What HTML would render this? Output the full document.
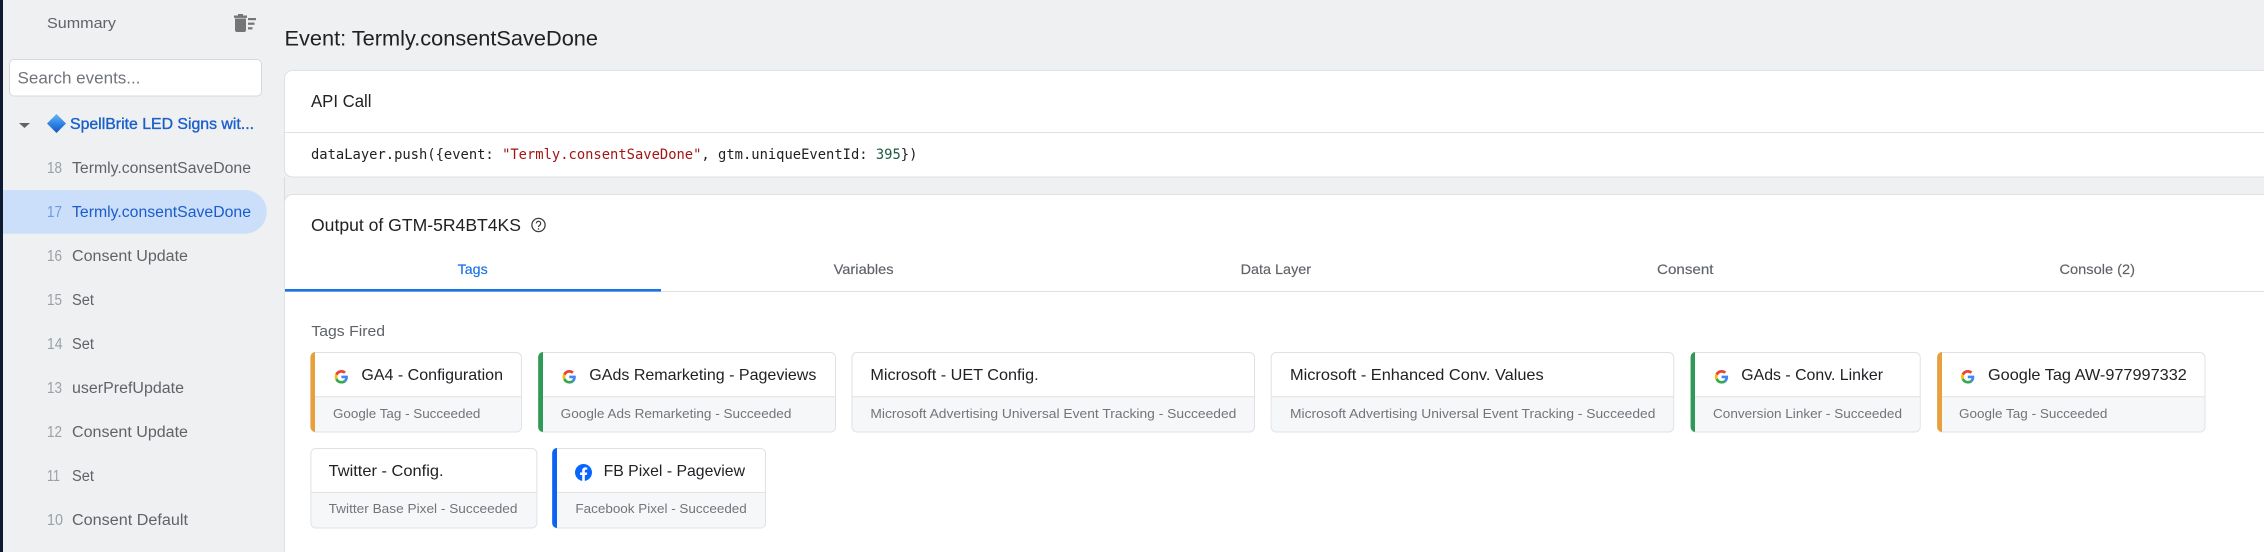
<!DOCTYPE html>
<html lang="en">
<head>
<meta charset="utf-8">
<title>Event: Termly.consentSaveDone</title>
<style>
html,body{margin:0;padding:0;width:2264px;height:552px;overflow:hidden;background:#eff0f2}
svg{display:block}
text{font-family:"Liberation Sans",Arial,sans-serif;white-space:pre}
.mono{font-family:"DejaVu Sans Mono","Liberation Mono",monospace;font-size:13.8px;fill:#202124}
.num{font-size:15.5px;fill:#9aa0a6}
.lab{font-size:15.5px;fill:#5f6368}
.h{font-size:17.5px;fill:#202124}
.tab{font-size:14px;fill:#5f6368;stroke:#5f6368;stroke-width:.15px}
.t{font-size:15.8px;fill:#202124}
.s{font-size:13px;fill:#70757a}
.card{fill:#fff;stroke:#dfe1e5;stroke-width:1}
.foot{fill:#f6f7f9}
.line{stroke:#dfe1e5;stroke-width:1}
</style>
</head>
<body>
<svg width="2264" height="552" viewBox="0 0 2264 552" xmlns="http://www.w3.org/2000/svg">
<defs>
<symbol id="g" viewBox="0 0 48 48">
<path fill="#EA4335" d="M24 9.5c3.54 0 6.71 1.22 9.21 3.6l6.85-6.85C35.9 2.38 30.47 0 24 0 14.62 0 6.51 5.38 2.56 13.22l7.98 6.19C12.43 13.72 17.74 9.5 24 9.5z"/>
<path fill="#4285F4" d="M46.98 24.55c0-1.57-.15-3.09-.38-4.55H24v9.02h12.94c-.58 2.96-2.26 5.48-4.78 7.18l7.73 6c4.51-4.18 7.09-10.36 7.09-17.65z"/>
<path fill="#FBBC05" d="M10.53 28.59c-.48-1.45-.76-2.99-.76-4.59s.27-3.14.76-4.59l-7.98-6.19C.92 16.46 0 20.12 0 24c0 3.88.92 7.54 2.56 10.78l7.97-6.19z"/>
<path fill="#34A853" d="M24 48c6.48 0 11.93-2.13 15.89-5.81l-7.73-6c-2.15 1.45-4.92 2.3-8.16 2.3-6.26 0-11.57-4.22-13.47-9.91l-7.98 6.19C6.51 42.62 14.62 48 24 48z"/>
</symbol>
<linearGradient id="dia" x1="0" y1="0" x2="0" y2="1">
<stop offset="0" stop-color="#6db3f5"/><stop offset=".5" stop-color="#2f86e6"/><stop offset="1" stop-color="#1257bd"/>
</linearGradient>
</defs>

<!-- window backgrounds -->
<rect x="0" y="0" width="2264" height="552" fill="#eff0f2"/>
<rect x="0" y="0" width="3" height="552" fill="#0e1a30"/>
<line x1="284.5" y1="177" x2="284.5" y2="552" stroke="#d9dbdf" stroke-width="1"/>

<!-- sidebar -->
<text x="47" y="28" font-size="15" fill="#5f6368" textLength="69" lengthAdjust="spacingAndGlyphs">Summary</text>
<g fill="#757575">
<rect x="234" y="15.5" width="13" height="2.4"/>
<rect x="238" y="14" width="5" height="2"/>
<path d="M235 18.5h11v11.5a2 2 0 0 1-2 2h-7a2 2 0 0 1-2-2z"/>
<rect x="248" y="18" width="8" height="2.2"/>
<rect x="248" y="22.6" width="6.5" height="2.2"/>
<rect x="248" y="27.2" width="4.5" height="2.2"/>
</g>
<rect x="9.5" y="59.5" width="252" height="36.5" rx="4.5" fill="#fff" stroke="#d6d8dc" stroke-width="1"/>
<text x="17.5" y="83.5" font-size="16.5" fill="#70757a" textLength="123" lengthAdjust="spacingAndGlyphs">Search events...</text>

<path d="M19 123h11l-5.5 5z" fill="#5f6368"/>
<polygon points="56.5,114 66,123.5 56.5,133 47,123.5" fill="url(#dia)"/>
<text x="70" y="129" font-size="15.5" fill="#1a5fcb" stroke="#1a5fcb" stroke-width=".35" textLength="184" lengthAdjust="spacingAndGlyphs">SpellBrite LED Signs wit...</text>

<path d="M3 190H245a21.8 21.8 0 0 1 0 43.7H3z" fill="#cbdffb"/>

<text class="num" x="47" y="173" textLength="15" lengthAdjust="spacingAndGlyphs">18</text>
<text class="lab" x="72" y="173" textLength="179" lengthAdjust="spacingAndGlyphs">Termly.consentSaveDone</text>
<text class="num" x="47" y="217" textLength="15" lengthAdjust="spacingAndGlyphs" style="fill:#6d9be0">17</text>
<text class="lab" x="72" y="217" textLength="179" lengthAdjust="spacingAndGlyphs" style="fill:#1a5cc8">Termly.consentSaveDone</text>
<text class="num" x="47" y="261" textLength="15" lengthAdjust="spacingAndGlyphs">16</text>
<text class="lab" x="72" y="261" textLength="116" lengthAdjust="spacingAndGlyphs">Consent Update</text>
<text class="num" x="47" y="305" textLength="15" lengthAdjust="spacingAndGlyphs">15</text>
<text class="lab" x="72" y="305" textLength="22" lengthAdjust="spacingAndGlyphs">Set</text>
<text class="num" x="47" y="349" textLength="15.5" lengthAdjust="spacingAndGlyphs">14</text>
<text class="lab" x="72" y="349" textLength="22" lengthAdjust="spacingAndGlyphs">Set</text>
<text class="num" x="47" y="393" textLength="15" lengthAdjust="spacingAndGlyphs">13</text>
<text class="lab" x="72" y="393" textLength="112" lengthAdjust="spacingAndGlyphs">userPrefUpdate</text>
<text class="num" x="47" y="437" textLength="15" lengthAdjust="spacingAndGlyphs">12</text>
<text class="lab" x="72" y="437" textLength="116" lengthAdjust="spacingAndGlyphs">Consent Update</text>
<text class="num" x="47" y="481" textLength="13" lengthAdjust="spacingAndGlyphs">11</text>
<text class="lab" x="72" y="481" textLength="22" lengthAdjust="spacingAndGlyphs">Set</text>
<text class="num" x="47" y="525" textLength="16" lengthAdjust="spacingAndGlyphs">10</text>
<text class="lab" x="72" y="525" textLength="116" lengthAdjust="spacingAndGlyphs">Consent Default</text>

<!-- main heading -->
<text x="284.5" y="45.7" font-size="21.5" fill="#202124" textLength="313.5" lengthAdjust="spacingAndGlyphs">Event: Termly.consentSaveDone</text>

<!-- API call card -->
<path class="card" d="M2270 70.5H292.5a8 8 0 0 0-8 8V169a8 8 0 0 0 8 8H2270z"/>
<line class="line" x1="285" y1="132.5" x2="2264" y2="132.5"/>
<text class="h" x="311" y="107" textLength="60.5" lengthAdjust="spacingAndGlyphs">API Call</text>
<text class="mono" x="311" y="159">dataLayer.push({event: <tspan fill="#a31515">"Termly.consentSaveDone"</tspan>, gtm.uniqueEventId: <tspan fill="#1d5c3f">395</tspan>})</text>

<!-- Output card -->
<path class="card" d="M2270 194.5H292.5a8 8 0 0 0-8 8V560H2270z"/>
<text class="h" x="311" y="231" textLength="210" lengthAdjust="spacingAndGlyphs">Output of GTM-5R4BT4KS</text>
<circle cx="538.5" cy="225" r="6.6" fill="none" stroke="#3c4043" stroke-width="1.3"/>
<path d="M536.3 223.4a2.2 2.2 0 1 1 3.4 1.9c-.8.5-1.2.9-1.2 1.7" fill="none" stroke="#3c4043" stroke-width="1.2"/>
<circle cx="538.5" cy="228.9" r=".8" fill="#3c4043"/>

<!-- tabs -->
<text class="tab" x="457.7" y="274" textLength="30" lengthAdjust="spacingAndGlyphs" style="fill:#1a73e8;stroke:#1a73e8">Tags</text>
<text class="tab" x="833.6" y="274" textLength="60" lengthAdjust="spacingAndGlyphs">Variables</text>
<text class="tab" x="1240.6" y="274" textLength="70.5" lengthAdjust="spacingAndGlyphs">Data Layer</text>
<text class="tab" x="1657" y="274" textLength="56.5" lengthAdjust="spacingAndGlyphs">Consent</text>
<text class="tab" x="2059.5" y="274" textLength="75.5" lengthAdjust="spacingAndGlyphs">Console (2)</text>
<line class="line" x1="285" y1="291.5" x2="2264" y2="291.5"/>
<rect x="285" y="289" width="376" height="2.6" fill="#1a73e8"/>

<text x="311.4" y="336" font-size="14.5" fill="#5f6368" textLength="73.6" lengthAdjust="spacingAndGlyphs">Tags Fired</text>

<!-- Card 1 -->
<rect class="card" x="310.9" y="352.5" width="210.5" height="79.5" rx="5"/>
<path class="foot" d="M315 397H521v30a4.5 4.5 0 0 1-4.5 4.5H315z"/>
<path d="M315 352h-.0a5 5 0 0 0-4.6 5V427a5 5 0 0 0 4.6 5z" fill="#e8a03c"/>
<line class="line" x1="315" y1="396.8" x2="521.5" y2="396.8"/>
<use href="#g" x="334.6" y="370" width="13.6" height="13.6"/>
<text class="t" x="361.4" y="380" textLength="141.6" lengthAdjust="spacingAndGlyphs">GA4 - Configuration</text>
<text class="s" x="333" y="418" textLength="147.4" lengthAdjust="spacingAndGlyphs">Google Tag - Succeeded</text>

<!-- Card 2 -->
<rect class="card" x="538.5" y="352.5" width="297" height="79.5" rx="5"/>
<path class="foot" d="M543 397H835v30a4.5 4.5 0 0 1-4.5 4.5H543z"/>
<path d="M543 352a5 5 0 0 0-4.8 5V427a5 5 0 0 0 4.8 5z" fill="#2f9a55"/>
<line class="line" x1="543" y1="396.8" x2="835.5" y2="396.8"/>
<use href="#g" x="562.5" y="370" width="13.6" height="13.6"/>
<text class="t" x="589.3" y="380" textLength="227.1" lengthAdjust="spacingAndGlyphs">GAds Remarketing - Pageviews</text>
<text class="s" x="560.7" y="418" textLength="230.7" lengthAdjust="spacingAndGlyphs">Google Ads Remarketing - Succeeded</text>

<!-- Card 3 -->
<rect class="card" x="852" y="352.5" width="402.5" height="79.5" rx="5"/>
<path class="foot" d="M852.6 397H1254v30a4.5 4.5 0 0 1-4.5 4.5H857a4.5 4.5 0 0 1-4.5-4.5z"/>
<line class="line" x1="852" y1="396.8" x2="1254.5" y2="396.8"/>
<text class="t" x="870.4" y="380" textLength="168.3" lengthAdjust="spacingAndGlyphs">Microsoft - UET Config.</text>
<text class="s" x="870.4" y="418" textLength="366" lengthAdjust="spacingAndGlyphs">Microsoft Advertising Universal Event Tracking - Succeeded</text>

<!-- Card 4 -->
<rect class="card" x="1271.2" y="352.5" width="402.5" height="79.5" rx="5"/>
<path class="foot" d="M1271.8 397H1673v30a4.5 4.5 0 0 1-4.5 4.5H1276a4.5 4.5 0 0 1-4.5-4.5z"/>
<line class="line" x1="1271.2" y1="396.8" x2="1673.7" y2="396.8"/>
<text class="t" x="1290" y="380" textLength="253.7" lengthAdjust="spacingAndGlyphs">Microsoft - Enhanced Conv. Values</text>
<text class="s" x="1290" y="418" textLength="365.4" lengthAdjust="spacingAndGlyphs">Microsoft Advertising Universal Event Tracking - Succeeded</text>

<!-- Card 5 -->
<rect class="card" x="1691" y="352.5" width="229.2" height="79.5" rx="5"/>
<path class="foot" d="M1695 397H1919.7v30a4.5 4.5 0 0 1-4.5 4.5H1695z"/>
<path d="M1695 352a5 5 0 0 0-4.4 5V427a5 5 0 0 0 4.4 5z" fill="#2f9a55"/>
<line class="line" x1="1695" y1="396.8" x2="1920.2" y2="396.8"/>
<use href="#g" x="1714.8" y="370" width="13.6" height="13.6"/>
<text class="t" x="1741.3" y="380" textLength="141.7" lengthAdjust="spacingAndGlyphs">GAds - Conv. Linker</text>
<text class="s" x="1713" y="418" textLength="189" lengthAdjust="spacingAndGlyphs">Conversion Linker - Succeeded</text>

<!-- Card 6 -->
<rect class="card" x="1937.5" y="352.5" width="267.5" height="79.5" rx="5"/>
<path class="foot" d="M1942 397H2204.5v30a4.5 4.5 0 0 1-4.5 4.5H1942z"/>
<path d="M1942 352a5 5 0 0 0-4.8 5V427a5 5 0 0 0 4.8 5z" fill="#e8a03c"/>
<line class="line" x1="1942" y1="396.8" x2="2205" y2="396.8"/>
<use href="#g" x="1961" y="370" width="13.6" height="13.6"/>
<text class="t" x="1988" y="380" textLength="198.8" lengthAdjust="spacingAndGlyphs">Google Tag AW-977997332</text>
<text class="s" x="1959" y="418" textLength="148.4" lengthAdjust="spacingAndGlyphs">Google Tag - Succeeded</text>

<!-- Card 7 -->
<rect class="card" x="310.9" y="448.5" width="226" height="79.5" rx="5"/>
<path class="foot" d="M311.5 492.8H536.3V523a4.5 4.5 0 0 1-4.5 4.5H316a4.5 4.5 0 0 1-4.5-4.5z"/>
<line class="line" x1="311" y1="492.4" x2="536.9" y2="492.4"/>
<text class="t" x="328.6" y="476" textLength="115" lengthAdjust="spacingAndGlyphs">Twitter - Config.</text>
<text class="s" x="328.6" y="513" textLength="188.9" lengthAdjust="spacingAndGlyphs">Twitter Base Pixel - Succeeded</text>

<!-- Card 8 -->
<rect class="card" x="552.5" y="448.5" width="213" height="79.5" rx="5"/>
<path class="foot" d="M557 492.8H765V523a4.5 4.5 0 0 1-4.5 4.5H557z"/>
<path d="M557 448a5 5 0 0 0-4.8 5V523a5 5 0 0 0 4.8 5z" fill="#0b62f5"/>
<line class="line" x1="557" y1="492.4" x2="765.5" y2="492.4"/>
<svg x="575" y="464" width="17" height="17" viewBox="0 0 24 24">
<circle cx="12" cy="12" r="12" fill="#0866ff"/>
<path fill="#fff" d="M16.67 15.47l.53-3.47h-3.33V9.75c0-.95.47-1.87 1.96-1.87h1.51V4.92s-1.37-.23-2.69-.23c-2.74 0-4.53 1.66-4.53 4.66V12H7.08v3.47h3.05v8.39a12.1 12.1 0 0 0 3.75 0v-8.39z"/>
</svg>
<text class="t" x="603.6" y="476" textLength="141.4" lengthAdjust="spacingAndGlyphs">FB Pixel - Pageview</text>
<text class="s" x="575.4" y="513" textLength="171.4" lengthAdjust="spacingAndGlyphs">Facebook Pixel - Succeeded</text>
</svg>
</body>
</html>
